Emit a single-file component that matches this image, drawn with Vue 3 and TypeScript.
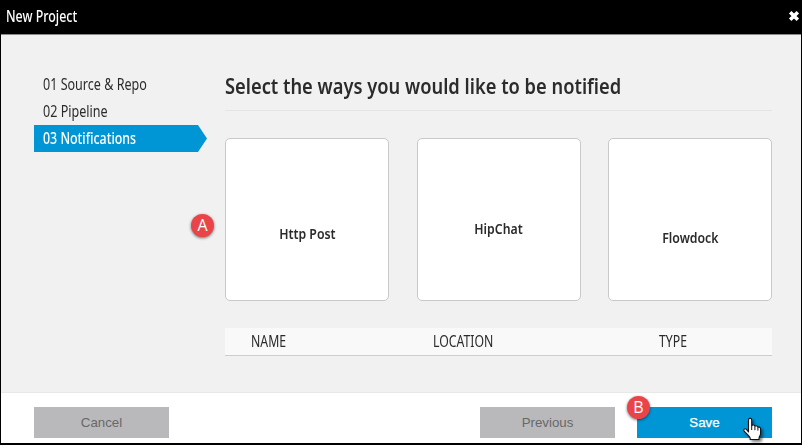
<script setup lang="ts">
interface Step {
  label: string
  active?: boolean
}

const steps: Step[] = [
  { label: '01 Source & Repo' },
  { label: '02 Pipeline' },
  { label: '03 Notifications', active: true },
]

const channels = [
  { name: 'Http Post', slot: 'http' },
  { name: 'HipChat', slot: 'hipchat' },
  { name: 'Flowdock', slot: 'flowdock' },
]

const columns = ['Name', 'Location', 'Type']
</script>

<template>
  <div class="dialog">
    <header class="titlebar">
      <span class="titlebar-text">New Project</span>
      <button class="close" aria-label="Close">
        <svg width="12" height="12" viewBox="0 0 11 11">
          <path d="M2 2 9 9M9 2 2 9" stroke="#fff" stroke-width="3.3" stroke-linecap="butt" />
        </svg>
      </button>
    </header>

    <main class="body">
      <nav class="steps">
        <div v-for="step in steps" :key="step.label" class="step" :class="{ active: step.active }">
          <span class="step-text">{{ step.label }}</span>
        </div>
      </nav>

      <section class="content">
        <h1 class="heading"><span class="heading-text">Select the ways you would like to be notified</span></h1>
        <div class="cards">
          <div v-for="channel in channels" :key="channel.name" class="card" :class="channel.slot">
            <span class="card-text">{{ channel.name }}</span>
          </div>
          <span class="badge badge-a">A</span>
        </div>
        <div class="table-head">
          <div v-for="column in columns" :key="column" class="th">
            <span class="th-text">{{ column }}</span>
          </div>
        </div>
      </section>
    </main>

    <footer class="footer">
      <button class="btn cancel">Cancel</button>
      <div class="right">
        <button class="btn">Previous</button>
        <button class="btn primary">
          Save
          <span class="badge badge-b">B</span>
          <svg class="cursor" width="22" height="26" viewBox="0 0 22 26">
            <path
              d="M6.5 15V3.2C6.5.4 9.7.4 9.7 3.2V8.5C10.8 7.4 12.6 7.8 12.9 9.2 14 8.4 15.6 8.9 15.9 10.3 17.1 9.7 18.6 10.4 18.6 12V16.5C18.6 18.4 17.2 19.5 17 21.2V22.5H8.2V21C7 18.6 4.1 16.4 2.2 14.2.9 12.5 2.9 10.9 4.4 12.3Z"
              fill="#fff" stroke="#111" stroke-width="1.1" stroke-linejoin="round"
            />
            <path d="M9.7 8.5V13M12.9 9.4V13.2M15.9 10.5V13.6" fill="none" stroke="#111" stroke-width="1" />
          </svg>
        </button>
      </div>
    </footer>
  </div>
</template>

<style>
body {
  background: #f1f1f1;
}
</style>

<style scoped>
.dialog {
  box-sizing: border-box;
  width: 802px;
  height: 445px;
  display: flex;
  flex-direction: column;
  overflow: hidden;
  background: #f1f1f1;
  border: 1px solid #000;
  border-bottom-width: 2px;
  font-family: 'Noto Sans', sans-serif;
  color: #2b2b2b;
}

.titlebar {
  box-sizing: border-box;
  height: 34px;
  flex: none;
  display: flex;
  align-items: center;
  justify-content: space-between;
  padding: 0 1px 3px 5px;
  background: #000;
  border-bottom: 1px solid #8a8a8a;
  color: #fff;
}

.titlebar-text,
.step-text,
.heading-text,
.card-text,
.th-text {
  display: inline-block;
  white-space: nowrap;
  transform-origin: left center;
}

.titlebar-text {
  font-size: 15.5px;
  font-weight: 500;
  transform: scaleX(0.8);
}

button {
  border: 0;
  padding: 0;
  background: none;
}

.close {
  display: flex;
}

.body {
  flex: 1;
  display: flex;
  gap: 18px;
  padding: 0 29px 0 32px;
  border-bottom: 1px solid #e8e8e8;
}

.steps {
  width: 174px;
  flex: none;
  padding-top: 36px;
}

.step {
  box-sizing: border-box;
  height: 27px;
  display: flex;
  align-items: center;
  padding: 0 0 2px 10px;
  font-size: 15.5px;
}

.step-text {
  transform: scaleX(0.81);
}

.step.active {
  margin-right: 1px;
  margin-left: 1px;
  padding-left: 9px;
  background: #0096d6;
  color: #fff;
  font-weight: 500;
  clip-path: polygon(0 0, 164px 0, 173px 50%, 164px 100%, 0 100%);
  margin-right: 0;
}

.step.active .step-text {
  transform: scaleX(0.8);
}

.content {
  width: 547px;
}

.heading {
  box-sizing: border-box;
  height: 76px;
  margin: 0 0 27px;
  padding-top: 36px;
  border-bottom: 1px solid #e4e4e4;
  font-size: 21.5px;
  line-height: 30px;
  font-weight: 600;
}

.heading-text {
  transform: scaleX(0.851);
}

.cards {
  position: relative;
  display: flex;
  justify-content: space-between;
}

.card {
  box-sizing: border-box;
  width: 164px;
  height: 163px;
  display: flex;
  justify-content: center;
  background: #fff;
  border: 1px solid #c9c9c9;
  border-radius: 5px;
  font-size: 15px;
  line-height: 20px;
  font-weight: 600;
}

.card-text {
  transform: scaleX(0.82);
  transform-origin: center;
}

.http {
  padding-top: 84px;
}

.hipchat {
  padding-top: 79px;
}

.flowdock {
  padding-top: 88px;
}

.table-head {
  box-sizing: border-box;
  height: 28px;
  margin-top: 27px;
  display: grid;
  grid-template-columns: 182px 226px 1fr;
  align-items: center;
  padding: 0 0 2px 26px;
  background: #f9f9f9;
  border-bottom: 1px solid #cdcdcd;
  font-size: 15.5px;
  text-transform: uppercase;
}

.th-text {
  transform: scaleX(0.79);
}

.footer {
  height: 50px;
  flex: none;
  display: flex;
  align-items: center;
  justify-content: space-between;
  box-sizing: border-box;
  padding: 9px 29px 0 33px;
  background: #fff;
}

.right {
  display: flex;
  gap: 22px;
}

.btn {
  position: relative;
  width: 135px;
  height: 31px;
  background: #b9b9bb;
  color: #686868;
  font: 13.3px 'Liberation Sans', Arial, sans-serif;
}

.primary {
  background: #0096d6;
  color: #fff;
  -webkit-text-stroke: 0.25px #fff;
}

.badge {
  position: absolute;
  width: 23px;
  height: 23px;
  border-radius: 50%;
  background: #e94549;
  box-shadow: 0 1px 3px rgba(0, 0, 0, 0.55);
  color: #fff;
  font: 16px/23px 'Open Sans', sans-serif;
  text-align: center;
  -webkit-text-stroke: 0;
}

.badge-a {
  left: -34px;
  top: 76px;
}

.badge-b {
  left: -10px;
  top: -11px;
}

.cursor {
  position: absolute;
  left: 105px;
  top: 10px;
  filter: drop-shadow(2px 2px 1.5px rgba(0, 0, 0, 0.5));
}
</style>
